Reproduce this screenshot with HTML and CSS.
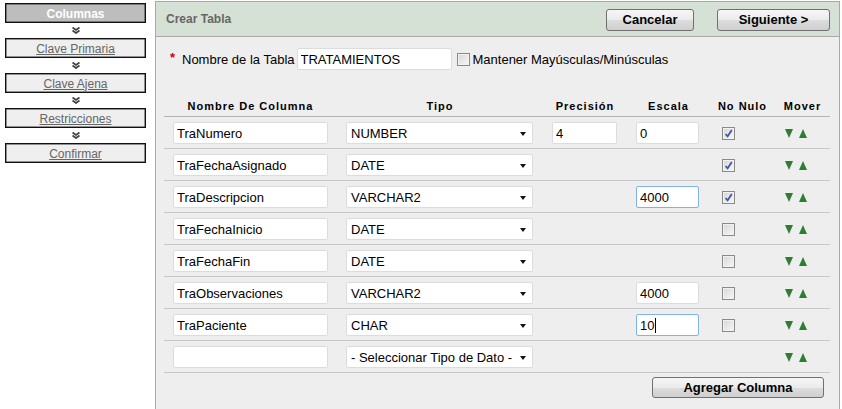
FILE: index.html
```html
<!DOCTYPE html>
<html lang="es">
<head>
<meta charset="utf-8">
<title>Crear Tabla</title>
<link rel="stylesheet" href="styles.css">
</head>
<body>
<div class="page">
  <aside class="steps">
    <div class="step active">Columnas</div>
    <div class="chev"><svg width="8" height="7" viewBox="0 0 8 7"><polyline points="0.5,0.5 4,3 7.5,0.5" /><polyline points="0.5,3.5 4,6 7.5,3.5" /></svg></div>
    <div class="step"><a href="#">Clave Primaria</a></div>
    <div class="chev"><svg width="8" height="7" viewBox="0 0 8 7"><polyline points="0.5,0.5 4,3 7.5,0.5" /><polyline points="0.5,3.5 4,6 7.5,3.5" /></svg></div>
    <div class="step"><a href="#">Clave Ajena</a></div>
    <div class="chev"><svg width="8" height="7" viewBox="0 0 8 7"><polyline points="0.5,0.5 4,3 7.5,0.5" /><polyline points="0.5,3.5 4,6 7.5,3.5" /></svg></div>
    <div class="step"><a href="#">Restricciones</a></div>
    <div class="chev"><svg width="8" height="7" viewBox="0 0 8 7"><polyline points="0.5,0.5 4,3 7.5,0.5" /><polyline points="0.5,3.5 4,6 7.5,3.5" /></svg></div>
    <div class="step"><a href="#">Confirmar</a></div>
  </aside>

  <main class="panel">
    <header class="panel-head">
      <span class="title">Crear Tabla</span>
      <div class="actions">
        <button class="btn btn-cancel">Cancelar</button>
        <button class="btn btn-next">Siguiente &gt;</button>
      </div>
    </header>

    <div class="panel-body">
      <div class="name-row">
        <span class="req">*</span>
        <label class="lbl">Nombre de la Tabla</label>
        <input class="txt table-name" type="text" value="TRATAMIENTOS">
        <span class="cb"></span>
        <span class="lbl">Mantener Mayúsculas/Minúsculas</span>
      </div>

      <div class="cols">
        <div class="row head">
          <div>Nombre De Columna</div>
          <div>Tipo</div>
          <div>Precisión</div>
          <div>Escala</div>
          <div>No Nulo</div>
          <div>Mover</div>
        </div>

        <div class="row">
          <div class="c"><input class="txt name" value="TraNumero"></div>
          <div class="c"><span class="sel">NUMBER</span></div>
          <div class="c"><input class="txt prec" value="4"></div>
          <div class="c"><input class="txt scale" value="0"></div>
          <div class="c chk"><span class="cb on"><svg width="9" height="9" viewBox="0 0 9 9"><path d="M1.5 5 L3.6 7.3 L7.8 1" /></svg></span></div>
          <div class="c mv"><span class="dn"></span><span class="up"></span></div>
        </div>

        <div class="row">
          <div class="c"><input class="txt name" value="TraFechaAsignado"></div>
          <div class="c"><span class="sel">DATE</span></div>
          <div class="c"></div>
          <div class="c"></div>
          <div class="c chk"><span class="cb on"><svg width="9" height="9" viewBox="0 0 9 9"><path d="M1.5 5 L3.6 7.3 L7.8 1" /></svg></span></div>
          <div class="c mv"><span class="dn"></span><span class="up"></span></div>
        </div>

        <div class="row">
          <div class="c"><input class="txt name" value="TraDescripcion"></div>
          <div class="c"><span class="sel">VARCHAR2</span></div>
          <div class="c"></div>
          <div class="c"><input class="txt scale focus" value="4000"></div>
          <div class="c chk"><span class="cb on"><svg width="9" height="9" viewBox="0 0 9 9"><path d="M1.5 5 L3.6 7.3 L7.8 1" /></svg></span></div>
          <div class="c mv"><span class="dn"></span><span class="up"></span></div>
        </div>

        <div class="row">
          <div class="c"><input class="txt name" value="TraFechaInicio"></div>
          <div class="c"><span class="sel">DATE</span></div>
          <div class="c"></div>
          <div class="c"></div>
          <div class="c chk"><span class="cb"></span></div>
          <div class="c mv"><span class="dn"></span><span class="up"></span></div>
        </div>

        <div class="row">
          <div class="c"><input class="txt name" value="TraFechaFin"></div>
          <div class="c"><span class="sel">DATE</span></div>
          <div class="c"></div>
          <div class="c"></div>
          <div class="c chk"><span class="cb"></span></div>
          <div class="c mv"><span class="dn"></span><span class="up"></span></div>
        </div>

        <div class="row">
          <div class="c"><input class="txt name" value="TraObservaciones"></div>
          <div class="c"><span class="sel">VARCHAR2</span></div>
          <div class="c"></div>
          <div class="c"><input class="txt scale" value="4000"></div>
          <div class="c chk"><span class="cb"></span></div>
          <div class="c mv"><span class="dn"></span><span class="up"></span></div>
        </div>

        <div class="row">
          <div class="c"><input class="txt name" value="TraPaciente"></div>
          <div class="c"><span class="sel">CHAR</span></div>
          <div class="c"></div>
          <div class="c"><span class="txt scale focus fake">10<span class="caret"></span></span></div>
          <div class="c chk"><span class="cb"></span></div>
          <div class="c mv"><span class="dn"></span><span class="up"></span></div>
        </div>

        <div class="row">
          <div class="c"><input class="txt name" value=""></div>
          <div class="c"><span class="sel">- Seleccionar Tipo de Dato -</span></div>
          <div class="c"></div>
          <div class="c"></div>
          <div class="c chk"></div>
          <div class="c mv"><span class="dn"></span><span class="up"></span></div>
        </div>
      </div>

      <div class="footer">
        <button class="btn btn-add">Agregar Columna</button>
      </div>
    </div>
  </main>
</div>
</body>
</html>
```

FILE: styles.css
```css
html, body {
  margin: 0;
  padding: 0;
  background: #ffffff;
  font-family: "Liberation Sans", Arial, sans-serif;
  font-size: 13px;
  color: #000;
}

.page {
  display: flex;
  align-items: stretch;
  height: 409px;
}

/* ---------- steps sidebar ---------- */
.steps {
  width: 141px;
  padding: 3px 0 0 5px;
  margin-right: 9px;
  display: flex;
  flex-direction: column;
}

.step {
  height: 17px;
  border: 1px solid #111111;
  box-shadow: inset 0 0 0 0.5px #333;
  background: #efefef;
  display: flex;
  align-items: center;
  justify-content: center;
  font-size: 12px;
  padding-top: 1px;
}

.step a {
  color: #666666;
  text-decoration: underline;
}

.step.active {
  background: #bdbdbd;
  color: #ffffff;
  font-weight: bold;
}

.chev {
  height: 15px;
  display: flex;
  align-items: center;
  justify-content: center;
}

.chev svg polyline {
  fill: none;
  stroke: #444444;
  stroke-width: 1.8;
}

/* ---------- main panel ---------- */
.panel {
  flex: 1;
  margin-top: 1px;
  margin-right: 2px;
  border: 1px solid #a9a9a9;
  border-bottom: none;
  background: #eeeeee;
  display: flex;
  flex-direction: column;
}

.panel-head {
  height: 34px;
  background: #d6e1d6;
  border-bottom: 1px solid #a9a9a9;
  display: flex;
  align-items: center;
  justify-content: space-between;
  padding: 0 9px 0 10px;
}

.title {
  font-weight: bold;
  font-size: 12px;
  color: #666666;
}

.actions {
  display: flex;
  gap: 23px;
  padding-top: 1px;
}

.btn {
  font-family: "Liberation Sans", Arial, sans-serif;
  font-weight: bold;
  font-size: 13px;
  color: #000;
  height: 22px;
  padding: 0;
  border: 1px solid #707070;
  border-radius: 3px;
  background: linear-gradient(#f6f6f6 0%, #ebebeb 50%, #dddddd 51%, #cfcfcf 100%);
}

.btn-cancel { width: 88px; }
.btn-next { width: 113px; }
.btn-add { width: 172px; height: 21px; }

.panel-body {
  padding: 11px 9px 0 8px;
}

/* name row */
.name-row {
  display: flex;
  align-items: center;
  height: 22px;
  padding-left: 6px;
}

.req {
  color: #cc0000;
  font-weight: bold;
  font-size: 13px;
  width: 6px;
  margin-right: 6px;
  position: relative;
  top: -2px;
}

.lbl {
  font-size: 13px;
  margin-right: 2px;
}

.txt {
  box-sizing: border-box;
  height: 22px;
  border: 1px solid #dcdcdc;
  border-radius: 2px;
  background: #ffffff;
  font-family: "Liberation Sans", Arial, sans-serif;
  font-size: 13px;
  color: #000;
  padding: 0 3px;
  outline: none;
}

.table-name {
  width: 155px;
  margin-right: 5px;
}

.cb {
  box-sizing: border-box;
  display: inline-flex;
  align-items: center;
  justify-content: center;
  width: 13px;
  height: 13px;
  border: 1px solid #8a8a8a;
  background: linear-gradient(135deg, #d6d6d6, #f8f8f8);
  box-shadow: inset 0 0 0 1px #f2f2f2;
  margin-right: 3px;
}

.cb svg path {
  fill: none;
  stroke: #3b58a6;
  stroke-width: 1.7;
}

/* columns grid */
.cols {
  margin-top: 26px;
}

.row {
  display: grid;
  grid-template-columns: 173px 206px 84px 83px 65px 55px;
  padding: 5px 0 4px;
  border-bottom: 1px solid #c8c8c8;
  align-items: center;
  height: 22px;
}

.row.head {
  padding: 0 0 4px;
  height: 16px;
  align-items: end;
  border-bottom: 1px solid #b4b4b4;
  font-size: 11px;
  font-weight: bold;
  letter-spacing: 1px;
  text-align: center;
  color: #000;
}

.c {
  padding-left: 9px;
  display: flex;
  align-items: center;
  height: 22px;
}

.name { width: 155px; }
.prec { width: 65px; }
.scale { width: 63px; }

.focus {
  border-color: #7eb4ea;
}

.fake {
  display: inline-flex;
  align-items: center;
}

.caret {
  display: inline-block;
  width: 1px;
  height: 15px;
  background: #000;
  margin-left: 1px;
}

.sel {
  position: relative;
  box-sizing: border-box;
  width: 187px;
  height: 22px;
  border: 1px solid #dcdcdc;
  border-radius: 2px;
  background: #ffffff;
  padding-left: 4px;
  display: flex;
  align-items: center;
  font-size: 13px;
}

.sel::after {
  content: "";
  position: absolute;
  right: 6px;
  top: 9px;
  border-left: 3.5px solid transparent;
  border-right: 3.5px solid transparent;
  border-top: 4px solid #111;
}

.chk {
  padding-left: 12px;
}

.mv {
  padding-left: 10px;
  gap: 6px;
}

.dn, .up {
  display: inline-block;
  width: 0;
  height: 0;
  border-left: 4px solid transparent;
  border-right: 4px solid transparent;
}

.dn { border-top: 9px solid #2f7d32; }
.up { border-bottom: 9px solid #2f7d32; }

.footer {
  display: flex;
  justify-content: flex-end;
  padding: 4px 6px 0 0;
}
```
